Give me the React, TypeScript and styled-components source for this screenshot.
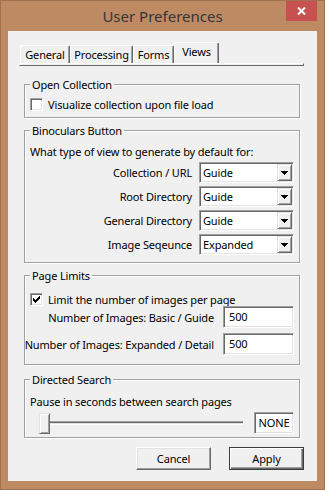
import React from "react";
import styled, { createGlobalStyle, css } from "styled-components";

const Global = createGlobalStyle`
  html, body { margin: 0; padding: 0; background: #BE8A64; }
  *, *::before, *::after { box-sizing: border-box; }
`;

const UI_FONT = `"Noto Sans", "Liberation Sans", sans-serif`;

const sunken = css`
  border: 1px solid;
  border-color: #a0a0a0 #ffffff #ffffff #a0a0a0;
  box-shadow: inset 1px 1px 0 #696969, inset -1px -1px 0 #e3e3e3;
`;

const raised = css`
  border: 1px solid;
  border-color: #e3e3e3 #696969 #696969 #e3e3e3;
  box-shadow: inset 1px 1px 0 #ffffff, inset -1px -1px 0 #a0a0a0;
`;

const Frame = styled.div`
  width: 325px;
  height: 490px;
  background: #be8a64;
  border: 1px solid #a0714f;
  padding: 0 7px 8px 7px;
  display: flex;
  flex-direction: column;
  font-family: ${UI_FONT};
  font-size: 11px;
  letter-spacing: -0.15px;
  color: #000;
`;

const TitleBar = styled.div`
  position: relative;
  flex: none;
  height: 30px;
  display: flex;
  align-items: center;
  justify-content: center;
`;

const Title = styled.div`
  font-family: "Noto Sans", "Open Sans", sans-serif;
  font-size: 15px;
  line-height: 20px;
  letter-spacing: 0;
  color: #363636;
  padding-bottom: 1px;
`;

const CloseButton = styled.div`
  position: absolute;
  top: 0;
  right: 0;
  width: 31px;
  height: 20px;
  background: #c75050;
  display: flex;
  align-items: center;
  justify-content: center;
`;

const Client = styled.div`
  flex: 1;
  background: #f0f0f0;
  display: flex;
  flex-direction: column;
  padding-top: 11px;
`;

const TabControl = styled.div`
  margin-left: 11px;
  width: 285px;
  display: flex;
  flex-direction: column;
`;

const TabRow = styled.div`
  display: flex;
  align-items: flex-end;
  height: 21px;
  padding-left: 1px;
`;

const Tab = styled.div<{ $w: number; $active?: boolean }>`
  width: ${(p) => p.$w}px;
  height: ${(p) => (p.$active ? 21 : 18)}px;
  border-top: 1px solid #ffffff;
  border-left: 1px solid #ffffff;
  border-right: 1px solid #696969;
  box-shadow: inset -1px 0 0 #a0a0a0;
  border-radius: 2px 2px 0 0;
  background: #f0f0f0;
  display: flex;
  justify-content: center;
  padding-top: 2px;
  line-height: 13px;
`;

const TabPage = styled.div`
  height: 3px;
  background: #f0f0f0;
  border-top: 1px solid #ffffff;
  border-left: 1px solid #ffffff;
  border-right: 1px solid #696969;
  border-bottom: 1px solid #696969;
`;

const Group = styled.fieldset<{ $mt: number; $pt: number; $pb: number }>`
  margin: ${(p) => p.$mt}px 17px 0 16px;
  padding: ${(p) => p.$pt}px 5px ${(p) => p.$pb}px 5px;
  border: 1px solid #a0a0a0;
  box-shadow: inset 1px 1px 0 #ffffff, 1px 1px 0 #ffffff;
  min-width: 0;
`;

const Legend = styled.legend`
  padding: 0 2px;
  height: 13px;
  line-height: 13px;
  background: #f0f0f0;
`;

const Stack = styled.div<{ $gap: number }>`
  display: flex;
  flex-direction: column;
  gap: ${(p) => p.$gap}px;
`;

const TextRow = styled.div`
  height: 13px;
  line-height: 13px;
  white-space: nowrap;
`;

const CheckRow = styled.label`
  display: flex;
  align-items: center;
  gap: 5px;
  height: 13px;
  line-height: 13px;
  white-space: nowrap;
`;

const CheckBox = styled.span`
  flex: none;
  width: 13px;
  height: 13px;
  background: #fff;
  ${sunken};
  display: flex;
  align-items: center;
  justify-content: center;
`;

const FieldGrid = styled.div<{ $col: number; $colGap: number; $rowGap: number }>`
  display: grid;
  grid-template-columns: minmax(0, 1fr) ${(p) => p.$col}px;
  column-gap: ${(p) => p.$colGap}px;
  row-gap: ${(p) => p.$rowGap}px;
  align-items: center;
`;

const FieldLabel = styled.span`
  display: flex;
  justify-content: flex-end;
  white-space: nowrap;
  line-height: 13px;
`;

const Select = styled.div`
  height: 21px;
  padding: 1px;
  background: #fff;
  ${sunken};
  display: flex;
`;

const SelectValue = styled.span`
  flex: 1;
  padding-left: 2px;
  line-height: 17px;
`;

const DropButton = styled.span`
  width: 15px;
  height: 17px;
  background: #f0f0f0;
  ${raised};
  display: flex;
  align-items: center;
  justify-content: center;
`;

const TextBox = styled.div<{ $center?: boolean }>`
  height: 22px;
  background: #fff;
  ${sunken};
  padding: 0 ${(p) => (p.$center ? 0 : 4)}px 0 ${(p) => (p.$center ? 0 : 5)}px;
  line-height: 20px;
  text-align: ${(p) => (p.$center ? "center" : "left")};
`;

const SliderRow = styled.div`
  display: flex;
  align-items: center;
  height: 22px;
`;

const Track = styled.div`
  flex: 1;
  display: flex;
  align-items: center;
  padding-left: 9px;
  margin-right: 11px;
`;

const Thumb = styled.div`
  flex: none;
  width: 11px;
  height: 21px;
  background: #f0f0f0;
  ${raised};
`;

const Channel = styled.div`
  flex: 1;
  height: 4px;
  border-top: 1px solid #a0a0a0;
  border-bottom: 1px solid #ffffff;
  background: linear-gradient(#696969 0 1px, #e3e3e3 1px 2px);
`;

const ValueBox = styled(TextBox)`
  width: 40px;
  flex: none;
`;

const ButtonRow = styled.div`
  display: flex;
  justify-content: flex-end;
  gap: 18px;
  margin: 9px 13px 0 0;
`;

const PushButton = styled.div<{ $default?: boolean }>`
  width: 75px;
  height: 23px;
  background: #f0f0f0;
  display: flex;
  align-items: center;
  justify-content: center;
  line-height: 13px;
  ${(p) =>
    p.$default
      ? css`
          border: 1px solid #3c3c3c;
          box-shadow: inset 1px 1px 0 #ffffff, inset -1px -1px 0 #696969,
            inset -2px -2px 0 #a0a0a0;
        `
      : css`
          border: 1px solid;
          border-color: #ffffff #696969 #696969 #ffffff;
          box-shadow: inset -1px -1px 0 #a0a0a0, inset 1px 1px 0 #e3e3e3;
        `}
`;

const Arrow = () => (
  <svg width="7" height="4" viewBox="0 0 7 4" shapeRendering="crispEdges">
    <path d="M0 0h7v1H0zM1 1h5v1H1zM2 2h3v1H2zM3 3h1v1H3z" fill="#000" />
  </svg>
);

const Check = () => (
  <svg width="7" height="7" viewBox="0 0 7 7" shapeRendering="crispEdges">
    <path
      d="M6 0h1v1H6zM5 1h2v1H5zM0 2h1v1H0zM4 2h3v1H4zM0 3h2v1H0zM3 3h3v1H3zM0 4h5v1H0zM1 5h3v1H1zM2 6h1v1H2z"
      fill="#000"
    />
  </svg>
);

const CloseGlyph = () => (
  <svg width="9" height="8" viewBox="0 0 9 8">
    <path d="M1 0.5 L8 7.5 M8 0.5 L1 7.5" stroke="#fff" strokeWidth="2" />
  </svg>
);

const views = [
  { label: "Collection / URL", value: "Guide" },
  { label: "Root Directory", value: "Guide" },
  { label: "General Directory", value: "Guide" },
  { label: "Image Seqeunce", value: "Expanded" },
];

const tabs = [
  { name: "General", w: 50 },
  { name: "Processing", w: 63 },
  { name: "Forms", w: 41 },
  { name: "Views", w: 45, active: true },
];

export default function App() {
  return (
    <>
      <Global />
      <Frame>
        <TitleBar>
          <Title>User Preferences</Title>
          <CloseButton>
            <CloseGlyph />
          </CloseButton>
        </TitleBar>
        <Client>
          <TabControl>
            <TabRow>
              {tabs.map((t) => (
                <Tab key={t.name} $w={t.w} $active={t.active}>
                  {t.name}
                </Tab>
              ))}
            </TabRow>
            <TabPage />
          </TabControl>

          <Group $mt={12} $pt={7} $pb={6}>
            <Legend>Open Collection</Legend>
            <CheckRow>
              <CheckBox />
              Visualize collection upon file load
            </CheckRow>
          </Group>

          <Group $mt={6} $pt={8} $pb={7}>
            <Legend>Binoculars Button</Legend>
            <Stack $gap={4}>
              <TextRow>What type of view to generate by default for:</TextRow>
              <FieldGrid $col={95} $colGap={7} $rowGap={3}>
                {views.map((v) => (
                  <React.Fragment key={v.label}>
                    <FieldLabel>{v.label}</FieldLabel>
                    <Select>
                      <SelectValue>{v.value}</SelectValue>
                      <DropButton>
                        <Arrow />
                      </DropButton>
                    </Select>
                  </React.Fragment>
                ))}
              </FieldGrid>
            </Stack>
          </Group>

          <Group $mt={6} $pt={11} $pb={9}>
            <Legend>Page Limits</Legend>
            <Stack $gap={0}>
              <CheckRow>
                <CheckBox>
                  <Check />
                </CheckBox>
                Limit the number of images per page
              </CheckRow>
              <FieldGrid $col={71} $colGap={9} $rowGap={5}>
                <FieldLabel>Number of Images: Basic / Guide</FieldLabel>
                <TextBox>500</TextBox>
                <FieldLabel>Number of Images: Expanded / Detail</FieldLabel>
                <TextBox>500</TextBox>
              </FieldGrid>
            </Stack>
          </Group>

          <Group $mt={8} $pt={9} $pb={3}>
            <Legend>Directed Search</Legend>
            <Stack $gap={4}>
              <TextRow>Pause in seconds between search pages</TextRow>
              <SliderRow>
                <Track>
                  <Thumb />
                  <Channel />
                </Track>
                <ValueBox $center>NONE</ValueBox>
              </SliderRow>
            </Stack>
          </Group>

          <ButtonRow>
            <PushButton>Cancel</PushButton>
            <PushButton $default>Apply</PushButton>
          </ButtonRow>
        </Client>
      </Frame>
    </>
  );
}
